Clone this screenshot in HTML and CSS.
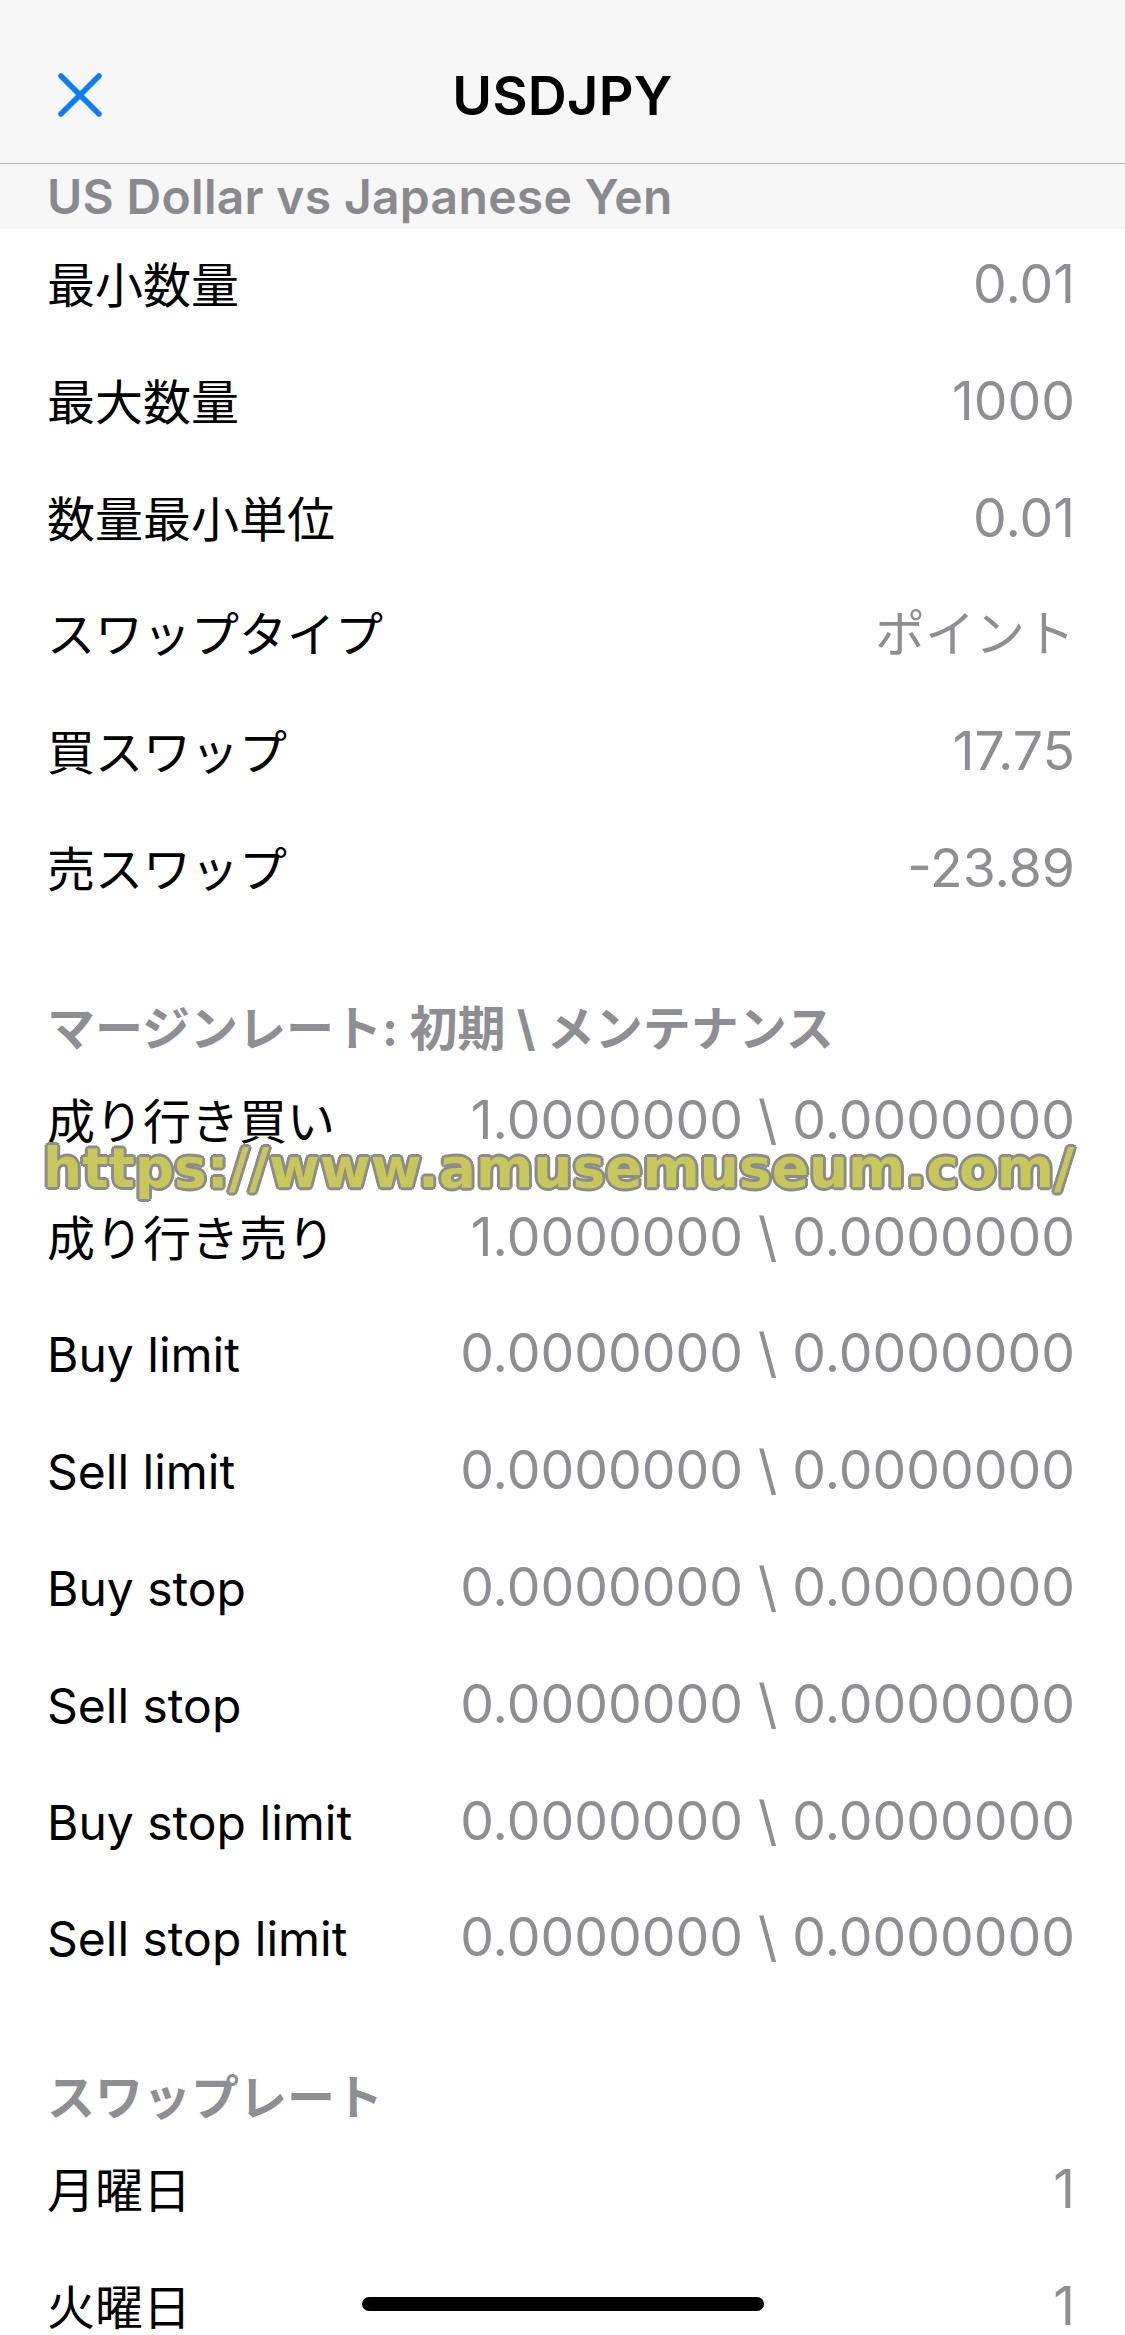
FILE: index.html
```html
<!DOCTYPE html>
<html lang="ja">
<head>
<meta charset="UTF-8" />
<meta name="viewport" content="width=device-width, initial-scale=1.0" />
<title>USDJPY</title>
<link rel="stylesheet" href="styles.css">
</head>
<body>

<!-- Шапка -->
<header class="top">
  <div class="top-bar">
    <button class="close" aria-label="close">
      <svg width="46" height="46" viewBox="0 0 46 46">
        <path d="M4 4 L42 42 M42 4 L4 42" stroke="#0a7cff" stroke-width="5.5" stroke-linecap="round" fill="none"/>
      </svg>
    </button>
    <h1>USDJPY</h1>
    <span></span>
  </div>
</header>
<div class="subtitle">US Dollar vs Japanese Yen</div>

<main>
  <div class="row"><span class="label">最小数量</span><span class="value">0.01</span></div>
  <div class="row"><span class="label">最大数量</span><span class="value">1000</span></div>
  <div class="row"><span class="label">数量最小単位</span><span class="value">0.01</span></div>
  <div class="row"><span class="label">スワップタイプ</span><span class="value ja">ポイント</span></div>
  <div class="row"><span class="label">買スワップ</span><span class="value">17.75</span></div>
  <div class="row"><span class="label">売スワップ</span><span class="value">-23.89</span></div>

  <h2 class="section">マージンレート: 初期 \ メンテナンス</h2>
  <div class="row"><span class="label">成り行き買い</span><span class="value">1.0000000 \ 0.0000000</span></div>
  <div class="row"><span class="label">成り行き売り</span><span class="value">1.0000000 \ 0.0000000</span></div>
  <div class="row"><span class="label">Buy limit</span><span class="value">0.0000000 \ 0.0000000</span></div>
  <div class="row"><span class="label">Sell limit</span><span class="value">0.0000000 \ 0.0000000</span></div>
  <div class="row"><span class="label">Buy stop</span><span class="value">0.0000000 \ 0.0000000</span></div>
  <div class="row"><span class="label">Sell stop</span><span class="value">0.0000000 \ 0.0000000</span></div>
  <div class="row"><span class="label">Buy stop limit</span><span class="value">0.0000000 \ 0.0000000</span></div>
  <div class="row"><span class="label">Sell stop limit</span><span class="value">0.0000000 \ 0.0000000</span></div>

  <h2 class="section">スワップレート</h2>
  <div class="row"><span class="label">月曜日</span><span class="value">1</span></div>
  <div class="row"><span class="label">火曜日</span><span class="value">1</span></div>
</main>

<!-- водяной знак поверх контента -->
<div class="watermark">https://www.amusemuseum.com/</div>
<div class="home-bar"></div>

</body>
</html>
```

FILE: styles.css
```css
/* Общие стили */
body {
  margin: 0;
  height: 2335px;
  overflow: hidden;
  position: relative;
  font-family: "Inter", "Noto Sans CJK JP", sans-serif;
  background: #fff;
  color: #000;
}

/* Шапка */
.top {
  background: #f7f7f7;
  padding-top: 27px;
  border-bottom: 1px solid #b4b4b4;
}
.top-bar {
  height: 136px;
  display: grid;
  grid-template-columns: 1fr auto 1fr;
  align-items: center;
}
.top-bar h1 {
  margin: 0;
  font-size: 54px;
  font-weight: 600;
  letter-spacing: 0.3px;
}
.close {
  margin-left: 57px;
  padding: 0;
  border: none;
  background: none;
  width: 46px;
  height: 46px;
  display: flex;
}

.subtitle {
  background: #f7f7f7;
  height: 65px;
  line-height: 65px;
  padding-left: 47px;
  font-size: 48px;
  font-weight: 600;
  letter-spacing: 0.3px;
  color: #8a8a8e;
}

/* Строки */
.row {
  height: 116.8px;
  box-sizing: border-box;
  padding: 25px 50px 0 47px;
  display: flex;
  justify-content: space-between;
  align-items: baseline;
}
.label {
  font-size: 48px;
  line-height: 60px;
}
.value {
  font-size: 53.5px;
  line-height: 60px;
  color: #8e8e93;
}
.value.ja {
  font-size: 50px;
}

.section {
  margin: 0;
  padding: 69px 0 6px 47px;
  font-size: 48px;
  line-height: 60px;
  font-weight: 700;
  color: #8e8e93;
}

/* Водяной знак */
.watermark {
  position: absolute;
  top: 1141px;
  left: 43px;
  font-family: "DejaVu Sans", sans-serif;
  font-weight: bold;
  font-size: 55px;
  line-height: 55px;
  color: #c8c75a;
  white-space: nowrap;
  text-shadow:
    3px 0 0 #8c8c8c, -3px 0 0 #8c8c8c, 0 3px 0 #8c8c8c, 0 -3px 0 #8c8c8c,
    2px 2px 0 #8c8c8c, -2px 2px 0 #8c8c8c, 2px -2px 0 #8c8c8c, -2px -2px 0 #8c8c8c;
}

.home-bar {
  position: fixed;
  left: 362px;
  bottom: 24px;
  width: 402px;
  height: 14px;
  border-radius: 7px;
  background: #000;
}
```
